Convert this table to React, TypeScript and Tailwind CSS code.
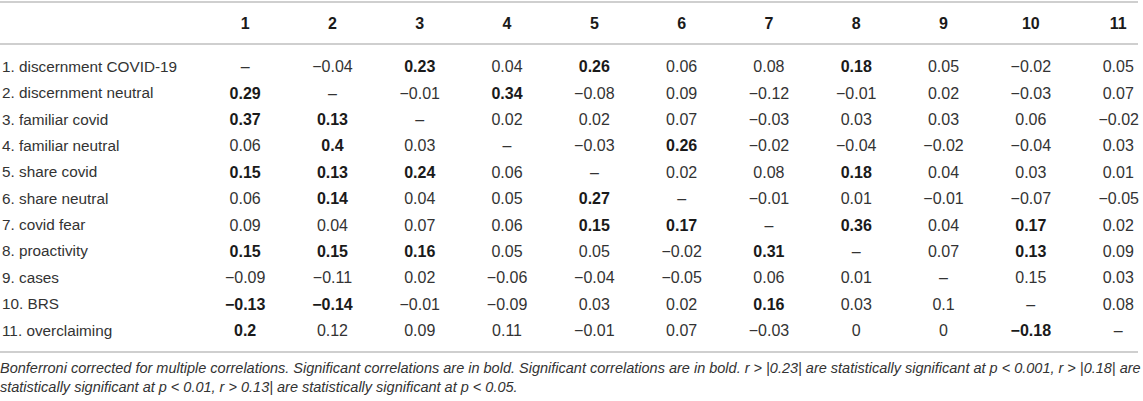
const cols = ['1', '2', '3', '4', '5', '6', '7', '8', '9', '10', '11']

// "*" marks a significant (bold) value
const rows: [string, string[]][] = [
  ['1. discernment COVID-19', ['–', '−0.04', '*0.23', '0.04', '*0.26', '0.06', '0.08', '*0.18', '0.05', '−0.02', '0.05']],
  ['2. discernment neutral', ['*0.29', '–', '−0.01', '*0.34', '−0.08', '0.09', '−0.12', '−0.01', '0.02', '−0.03', '0.07']],
  ['3. familiar covid', ['*0.37', '*0.13', '–', '0.02', '0.02', '0.07', '−0.03', '0.03', '0.03', '0.06', '−0.02']],
  ['4. familiar neutral', ['0.06', '*0.4', '0.03', '–', '−0.03', '*0.26', '−0.02', '−0.04', '−0.02', '−0.04', '0.03']],
  ['5. share covid', ['*0.15', '*0.13', '*0.24', '0.06', '–', '0.02', '0.08', '*0.18', '0.04', '0.03', '0.01']],
  ['6. share neutral', ['0.06', '*0.14', '0.04', '0.05', '*0.27', '–', '−0.01', '0.01', '−0.01', '−0.07', '−0.05']],
  ['7. covid fear', ['0.09', '0.04', '0.07', '0.06', '*0.15', '*0.17', '–', '*0.36', '0.04', '*0.17', '0.02']],
  ['8. proactivity', ['*0.15', '*0.15', '*0.16', '0.05', '0.05', '−0.02', '*0.31', '–', '0.07', '*0.13', '0.09']],
  ['9. cases', ['−0.09', '−0.11', '0.02', '−0.06', '−0.04', '−0.05', '0.06', '0.01', '–', '0.15', '0.03']],
  ['10. BRS', ['*−0.13', '*−0.14', '−0.01', '−0.09', '0.03', '0.02', '*0.16', '0.03', '0.1', '–', '0.08']],
  ['11. overclaiming', ['*0.2', '0.12', '0.09', '0.11', '−0.01', '0.07', '−0.03', '0', '0', '*−0.18', '–']],
]

function Cell({ v, last }: { v: string; last: boolean }) {
  const bold = v.startsWith('*')
  return (
    <td className={`text-center text-[16px] ${last ? 'pl-[24px]' : ''} ${bold ? 'font-bold text-[#1a1a1a]' : ''}`}>
      {bold ? v.slice(1) : v}
    </td>
  )
}

export default function App() {
  return (
    <div className="w-[1143px] h-[401px] bg-white pt-[1px] text-[#333] font-['Liberation_Sans',Arial,sans-serif]">
      <table className="w-[1138px] table-fixed border-collapse text-[15.3px]">
        <colgroup>
          <col className="w-[201.5px]" />
          {cols.slice(0, 10).map((c) => (
            <col key={c} className="w-[87.3px]" />
          ))}
          <col />
        </colgroup>
        <thead>
          <tr className="h-[42px] border-t-2 border-b-2 border-[#cfcfcf]">
            <th />
            {cols.map((c, i) => (
              <th key={c} className={`text-center text-[16px] font-bold text-[#1a1a1a] pt-[1px] ${i === 10 ? 'pl-[24px]' : ''}`}>
                {c}
              </th>
            ))}
          </tr>
        </thead>
        <tbody>
          <tr className="h-[10px]" />
          {rows.map(([label, vals]) => (
            <tr key={label} className="h-[26.4px]">
              <td className="pl-[2px] whitespace-nowrap">{label}</td>
              {vals.map((v, i) => (
                <Cell key={i} v={v} last={i === 10} />
              ))}
            </tr>
          ))}
          <tr className="h-[8px] border-b-2 border-[#cfcfcf]" />
        </tbody>
      </table>
      <p className="w-[1143px] mt-[6px] italic text-[14.5px] leading-[19px] text-[#333] whitespace-nowrap">
        Bonferroni corrected for multiple correlations. Significant correlations are in bold. Significant correlations are in bold. r &gt; |0.23| are statistically significant at p &lt; 0.001, r &gt; |0.18| are
        <br />
        statistically significant at p &lt; 0.01, r &gt; 0.13| are statistically significant at p &lt; 0.05.
      </p>
    </div>
  )
}
